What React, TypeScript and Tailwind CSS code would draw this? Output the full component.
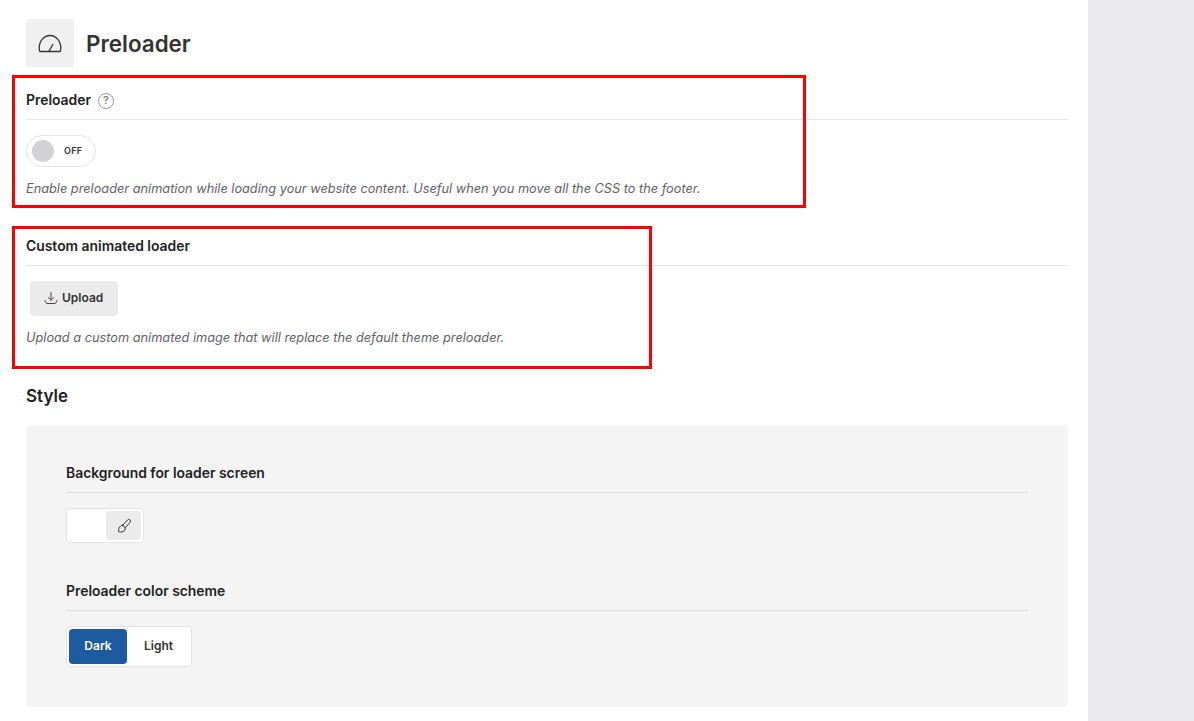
import React from 'react';

const Label = ({ children, pad }: { children: React.ReactNode; pad: string }) => (
  <div className={`flex items-center gap-[7px] h-[39px] border-b border-[#e5e5e5] text-[13.9px] font-semibold text-[#222] ${pad}`}>
    {children}
  </div>
);

const Hint = ({ children }: { children: React.ReactNode }) => (
  <p className="text-[12.75px] leading-5 italic text-[#5f6269]">{children}</p>
);

const GaugeIcon = () => (
  <svg width="24" height="24" viewBox="0 0 24 24" fill="none" stroke="#333" strokeWidth="1.3" strokeLinecap="round" strokeLinejoin="round">
    <path d="M1.8 20.500h20.400c.4-1 .6-2 .6-3.200C22.800 10 18 4.500 12 4.500S1.200 10 1.200 17.300c0 1.200.2 2.200.6 3.200z" />
    <path d="M11 20.200l3.800-6.700" />
  </svg>
);

const BrushIcon = () => (
  <svg width="16" height="16" viewBox="0 0 16 16" fill="none" stroke="#333" strokeWidth="1" strokeLinecap="round" strokeLinejoin="round">
    <path d="M6.800 7.200l4.700-5.200a1.700 1.700 0 0 1 2.600 2.200L9.300 9.700" />
    <path d="M6.800 7.200l2.500 2.500c.1 1.300-.3 2.500-1.200 3.300-1.100.9-3.300 1.200-5 .9-.5-.1-.7-.5-.6-1 .2-.7.2-1.500.4-2.400.4-1.800 2.100-3.300 3.900-3.300z" />
  </svg>
);

const UploadIcon = () => (
  <svg width="14" height="14" viewBox="0 0 14 14" fill="none" stroke="#444" strokeWidth="1" strokeLinecap="round" strokeLinejoin="round">
    <path d="M7 1.500v7.500M4.300 6.500L7 9.200l2.700-2.700" />
    <path d="M1 9.500c0 2 1.200 3 3 3h6c1.800 0 3-1 3-3" />
  </svg>
);

export default function App() {
  return (
    <div className="relative flex h-[721px] overflow-hidden bg-white font-['Inter',sans-serif] text-[#222]">
      <main className="w-[1088px] pl-[26px] pr-[20px]">
        <header className="flex items-center gap-3 pt-[19px]">
          <div className="flex items-center justify-center w-12 h-12 rounded bg-[#f0f0f0]">
            <GaugeIcon />
          </div>
          <h1 className="pt-px text-[22.4px] font-semibold text-[#333]">Preloader</h1>
        </header>

        <section className="mt-[14px]">
          <Label pad="pt-px">
            Preloader
            <span className="flex items-center justify-center w-4 h-4 rounded-full border border-[#999] text-[11px] font-medium text-[#777]">?</span>
          </Label>
          <div className="flex items-center w-[70px] h-8 mt-[15px] pl-[5px] rounded-full border border-[#e5e5e5] bg-white">
            <span className="w-[22px] h-[22px] rounded-full bg-[#d2d2d4]" />
            <span className="ml-[10px] text-[9px] font-semibold tracking-[0.3px] text-[#333]">OFF</span>
          </div>
          <div className="mt-[12px]">
            <Hint>Enable preloader animation while loading your website content. Useful when you move all the CSS to the footer.</Hint>
          </div>
        </section>

        <section className="mt-[28px]">
          <Label pad="pb-0">Custom animated loader</Label>
          <button className="flex items-center gap-1 h-[35px] mt-[15px] ml-1 pl-[14px] pr-[15px] pb-[2px] rounded bg-[#ebebeb] text-xs font-semibold text-[#333]">
            <UploadIcon />
            Upload
          </button>
          <div className="mt-[12px]">
            <Hint>Upload a custom animated image that will replace the default theme preloader.</Hint>
          </div>
        </section>

        <h2 className="mt-[36px] text-[17px] font-semibold leading-6 text-[#222]">Style</h2>

        <section className="mt-[17px] h-[282px] rounded bg-[#f4f4f4] px-10 pt-[38px]">
          <div className="pb-[9px] border-b border-[#dcdcdc] text-[13.9px] leading-5 font-semibold text-[#222]">Background for loader screen</div>
          <div className="flex justify-end w-[78px] h-[35px] mt-[15px] p-[2px] rounded border border-[#e3e3e3] bg-white">
            <span className="flex items-center justify-center w-[35px] h-[29px] rounded bg-[#ebebeb]">
              <BrushIcon />
            </span>
          </div>
          <div className="mt-[38px] pb-[9px] border-b border-[#dcdcdc] text-[13.9px] leading-5 font-semibold text-[#222]">Preloader color scheme</div>
          <div className="flex w-[126px] h-[41px] mt-[15px] p-[2px] rounded border border-[#e3e3e3] bg-white text-xs font-semibold">
            <span className="flex items-center justify-center w-[58px] pb-[2px] rounded bg-[#1c5ba0] text-white">Dark</span>
            <span className="flex items-center justify-center w-[62px] pb-[2px] pl-px text-[#333]">Light</span>
          </div>
        </section>
      </main>
      <aside className="flex-1 bg-[#ebebed]" />

      <div className="absolute left-3 top-[75px] w-[794px] h-[133px] border-[3px] border-[#fe0000]" />
      <div className="absolute left-3 top-[226px] w-[640px] h-[143px] border-[3px] border-[#fe0000]" />
    </div>
  );
}
